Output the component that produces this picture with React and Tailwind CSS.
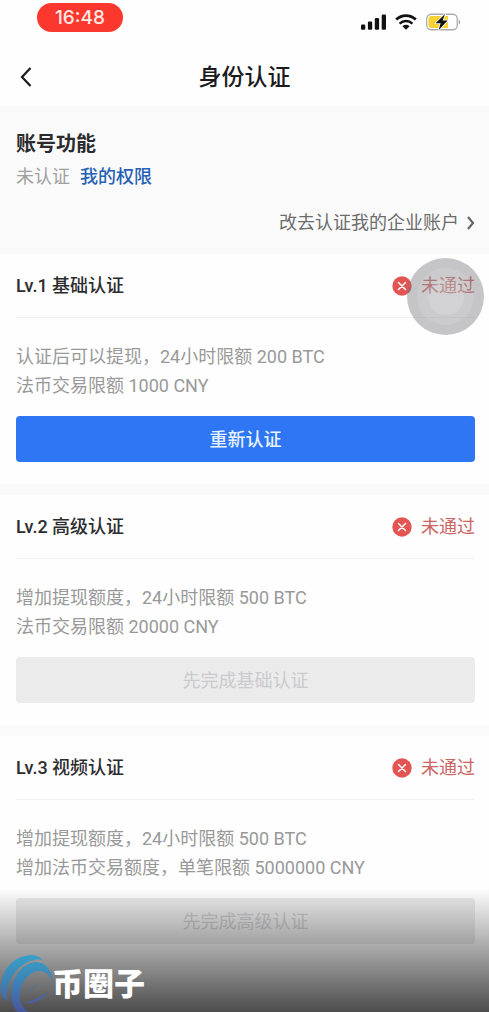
const LEVELS = [
  {
    id: 1,
    title: 'Lv.1 基础认证',
    lines: ['认证后可以提现，24小时限额 200 BTC', '法币交易限额 1000 CNY'],
    action: '重新认证',
    enabled: true,
  },
  {
    id: 2,
    title: 'Lv.2 高级认证',
    lines: ['增加提现额度，24小时限额 500 BTC', '法币交易限额 20000 CNY'],
    action: '先完成基础认证',
    enabled: false,
  },
  {
    id: 3,
    title: 'Lv.3 视频认证',
    lines: ['增加提现额度，24小时限额 500 BTC', '增加法币交易额度，单笔限额 5000000 CNY'],
    action: '先完成高级认证',
    enabled: false,
  },
];

const SignalIcon = () => (
  <svg width="25" height="16" viewBox="0 0 25 16" fill="#111" aria-hidden="true">
    <rect x="0" y="10.5" width="4.3" height="5.2" rx="1.2" />
    <rect x="6.9" y="7.5" width="4.3" height="8.2" rx="1.2" />
    <rect x="13.8" y="4" width="4.3" height="11.7" rx="1.2" />
    <rect x="20.7" y="0.5" width="4.3" height="15.2" rx="1.2" />
  </svg>
);

const WifiIcon = () => (
  <svg width="22" height="16" viewBox="0 0 22 16" fill="none" stroke="#111" aria-hidden="true">
    <path d="M1.2 5.6C6.8 0.2 15.2 0.2 20.8 5.6" strokeWidth="2.8" />
    <path d="M4.6 9.6C8.3 6.1 13.7 6.1 17.4 9.6" strokeWidth="2.6" />
    <path d="M7.4 12.2C9.5 10.4 12.5 10.4 14.6 12.2L11 15.8Z" fill="#111" stroke="none" />
  </svg>
);

const BatteryIcon = () => (
  <svg width="35" height="18" viewBox="0 0 35 18" aria-hidden="true">
    <rect x="0.75" y="1.25" width="30.5" height="15.5" rx="4.5" fill="#fff" stroke="#aaa" strokeWidth="1.3" />
    <path d="M5.5 3H22V15H5.5A3 3 0 0 1 2.5 12V6A3 3 0 0 1 5.5 3Z" fill="#f8d135" />
    <path d="M32.8 6.5C34.6 7.5 34.6 10.5 32.8 11.5Z" fill="#999" />
    <path
      d="M19 1L9.6 10.2H14.6L12.6 17.2L21.6 7.6H16.6Z"
      fill="#111"
      stroke="#fff"
      strokeWidth="1.6"
      paintOrder="stroke"
      strokeLinejoin="round"
    />
  </svg>
);

const FailedIcon = () => (
  <svg width="20" height="20" viewBox="0 0 20 20" fill="none" aria-hidden="true">
    <circle cx="10" cy="10" r="9.7" fill="#e25552" />
    <path d="M6.5 6.5L13.5 13.5M13.5 6.5L6.5 13.5" stroke="#fff" strokeWidth="1.5" strokeLinecap="round" />
  </svg>
);

const BrandLogo = () => (
  <svg width="52" height="58" viewBox="0 0 52 58" aria-hidden="true">
    <defs>
      <linearGradient id="brand" gradientUnits="userSpaceOnUse" x1="0" y1="2" x2="0" y2="58">
        <stop offset="0" stopColor="#389fc6" />
        <stop offset="0.5" stopColor="#3f7fb4" />
        <stop offset="1" stopColor="#4a559c" />
      </linearGradient>
    </defs>
    <path
      d="M43 6C38 1 31 0 25 2C10 5 -1 21 1 39C2 43 4 45 8 47C6 41 7 35 9 29C13 19 20 11 30 7C34 6 38 5 43 6Z"
      fill="url(#brand)"
    />
    <path
      d="M52 27C52 16 45 7 35 8C22 10 11 24 11 40C11 50 15 57 21 60L34 60C24 57 19 50 20 41C21 29 28 18 39 17C45 17 49 20 52 27Z"
      fill="url(#brand)"
    />
    <path d="M48 37C43 46 35 50 24 49C34 46 41 43 48 37Z" fill="#4a639f" />
    <path d="M39 30C33 31 28 36 26 43C29 38 33 34 39 30Z" fill="#4a6fa6" fillOpacity="0.5" />
  </svg>
);

const StatusBar = () => (
  <div className="flex h-12 items-start justify-between pl-[37px] pr-7 pt-[3px]">
    <span className="flex h-[29px] w-[86px] items-center justify-center rounded-full bg-[#fa382e] font-['Inter','Noto_Sans_CJK_SC',sans-serif] text-[19px] font-medium text-[#ffe9e4]">
      16:48
    </span>
    <div className="flex h-[38px] items-center gap-[9px]">
      <SignalIcon />
      <WifiIcon />
      <BatteryIcon />
    </div>
  </div>
);

const LevelCard = ({ level }) => (
  <section className="bg-[#fefefe] pb-[22px] pl-4 pr-[14px]">
    <div className="flex h-16 items-center justify-between border-b border-[#f1f1f1]">
      <h3 className="font-medium text-[#2c2c2e]">{level.title}</h3>
      <span className="flex items-center gap-[9px] text-[#cb6563]">
        <FailedIcon />
        未通过
      </span>
    </div>
    <div className="pt-6 leading-[29px] text-[#999]">
      {level.lines.map(line => (
        <p key={line}>{line}</p>
      ))}
    </div>
    <button
      type="button"
      disabled={!level.enabled}
      className={
        level.enabled
          ? 'mt-4 h-[46px] w-full rounded bg-[#2f76f4] pt-0.5 font-medium text-[#e9f3ff]'
          : 'mt-4 h-[46px] w-full rounded bg-[#ebebeb] pt-0.5 text-[#cbc9cd]'
      }
    >
      {level.action}
    </button>
  </section>
);

const App = () => (
  <div className="relative min-h-screen overflow-hidden bg-[#fefefe] font-['Roboto','Noto_Sans_CJK_SC',sans-serif] text-[18px] leading-[26px]">
    <header>
      <StatusBar />
      <div className="grid h-[58px] grid-cols-3 items-center px-4">
        <button type="button" aria-label="返回" className="w-6 pl-1">
          <svg width="12" height="20" viewBox="0 0 12 20" fill="none" stroke="#1b1b1b" strokeWidth="2.2" aria-hidden="true">
            <path d="M10.5 1L2 10L10.5 19" />
          </svg>
        </button>
        <h1 className="pt-0.5 text-center text-[23px] font-medium text-[#1b1b1d]">身份认证</h1>
      </div>
    </header>

    <main>
      <div className="bg-[#fafafa] pb-[18px] pl-4 pr-[14px] pt-[25px]">
        <h2 className="text-[20px] font-bold text-[#2b2b2d]">账号功能</h2>
        <div className="flex gap-[10px] pt-[7px]">
          <span className="text-[#a0a0a0]">未认证</span>
          <a href="#permissions" className="font-medium text-[#2560b4]">我的权限</a>
        </div>
        <a href="#business" className="mt-5 flex items-center justify-end gap-2 text-[#6c6c6c]">
          改去认证我的企业账户
          <svg width="8" height="14" viewBox="0 0 8 14" fill="none" stroke="#666" strokeWidth="2.2" aria-hidden="true">
            <path d="M1 1L6 7L1 13" />
          </svg>
        </a>
      </div>

      <div className="flex flex-col gap-[11px] bg-[#fafafa]">
        {LEVELS.map(level => (
          <LevelCard key={level.id} level={level} />
        ))}
      </div>
    </main>

    {/* Floating touch control */}
    <button
      type="button"
      aria-label="辅助触控"
      className="absolute right-[5px] top-[258px] flex size-[77px] items-center justify-center rounded-full bg-[#707078]/40"
    >
      <span className="flex size-[57px] items-center justify-center rounded-full bg-white/10">
        <span className="size-9 rounded-full bg-white/15" />
      </span>
    </button>

    {/* Bottom shade with brand mark */}
    <div className="pointer-events-none absolute inset-x-0 bottom-0 flex h-[124px] items-end bg-linear-to-b from-black/0 to-black/70">
      <BrandLogo />
      <span className="pb-[7px] text-[31px] font-black leading-10 text-white">币圈子</span>
    </div>
  </div>
);

export default App;
